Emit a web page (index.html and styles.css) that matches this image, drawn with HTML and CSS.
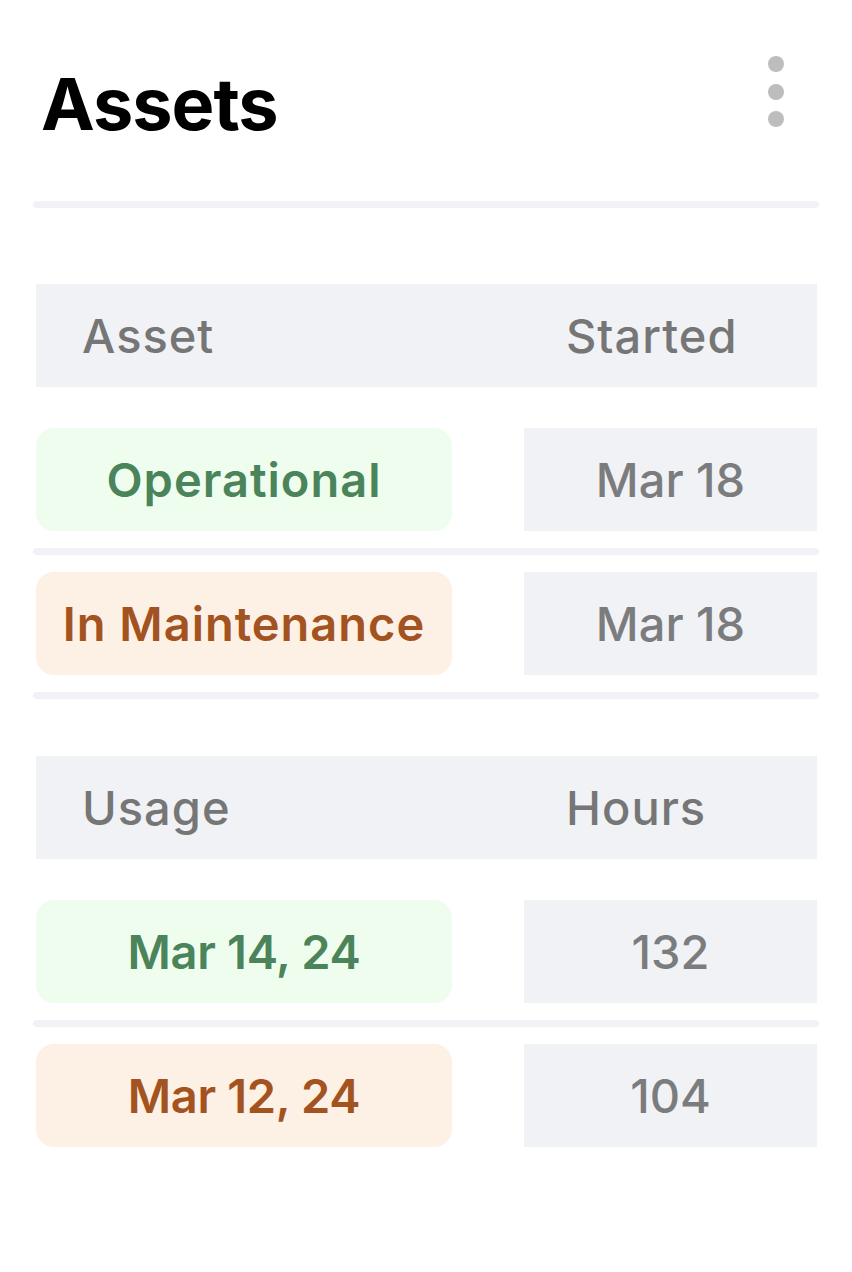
FILE: index.html
```html
<!DOCTYPE html>
<html lang="en">
<head>
<meta charset="utf-8">
<title>Assets</title>
<link rel="stylesheet" href="styles.css">
</head>
<body>
<div class="page">
  <header class="top">
    <h1 class="title">Assets</h1>
    <button class="kebab" aria-label="More options">
      <span class="dot"></span><span class="dot"></span><span class="dot"></span>
    </button>
  </header>
  <div class="divider"></div>

  <section class="table first">
    <div class="row head">
      <div class="hcell">Asset</div>
      <div class="hcell right">Started</div>
    </div>
    <div class="row">
      <div class="badge green word">Operational</div>
      <div class="cell">Mar 18</div>
    </div>
    <div class="divider row-div"></div>
    <div class="row">
      <div class="badge orange word">In Maintenance</div>
      <div class="cell">Mar 18</div>
    </div>
    <div class="divider row-div"></div>
  </section>

  <section class="table second">
    <div class="row head">
      <div class="hcell">Usage</div>
      <div class="hcell right">Hours</div>
    </div>
    <div class="row">
      <div class="badge green">Mar 14, 24</div>
      <div class="cell">132</div>
    </div>
    <div class="divider row-div"></div>
    <div class="row">
      <div class="badge orange">Mar 12, 24</div>
      <div class="cell">104</div>
    </div>
  </section>
</div>
</body>
</html>
```

FILE: styles.css
```css
* { box-sizing: border-box; }

html, body {
  margin: 0;
  padding: 0;
  background: #ffffff;
}

body {
  font-family: Inter, "Noto Sans", "Liberation Sans", sans-serif;
  width: 852px;
  height: 1272px;
}

.page {
  padding: 0 33px 0 33px;
}

.top {
  display: flex;
  justify-content: space-between;
  align-items: flex-start;
  height: 201px;
}

.title {
  margin: 68px 0 0 8px;
  font-size: 72px;
  line-height: 72px;
  font-weight: 700;
  color: #000000;
  letter-spacing: -1px;
}

.kebab {
  margin: 56px 35px 0 0;
  padding: 0;
  border: 0;
  background: none;
  display: flex;
  flex-direction: column;
  gap: 11.5px;
}

.dot {
  display: block;
  width: 16px;
  height: 16px;
  border-radius: 50%;
  background: #bdbdbd;
}

.divider {
  height: 7px;
  border-radius: 4px;
  background: #f0f2f5;
}

.table {
  padding: 0 2px 0 3px;
}

.table.first { margin-top: 76px; }
.table.second { margin-top: 57px; }

.row {
  display: grid;
  grid-template-columns: 416px 293px;
  column-gap: 72px;
  height: 103px;
}

.row-div {
  margin: 17px -2px 17px -3px;
}

.head {
  background: #f1f2f5;
  grid-template-columns: 1fr 293px;
  margin-bottom: 41px;
}

.hcell {
  display: flex;
  align-items: center;
  padding-left: 46px;
  font-size: 47px;
  font-weight: 500;
  letter-spacing: 1px;
  color: #767676;
}

.hcell.right {
  padding-left: 42px;
}

.badge {
  display: flex;
  align-items: center;
  justify-content: center;
  border-radius: 18px;
  font-size: 47px;
  font-weight: 600;
  letter-spacing: -0.3px;
}

.badge.word {
  letter-spacing: 1px;
}

.badge.green {
  background: #effdee;
  color: #4b845a;
}

.badge.orange {
  background: #fdf0e4;
  color: #a3531f;
}

.cell {
  display: flex;
  align-items: center;
  justify-content: center;
  background: #f1f2f5;
  font-size: 47px;
  font-weight: 500;
  color: #7b7c7e;
}
```
